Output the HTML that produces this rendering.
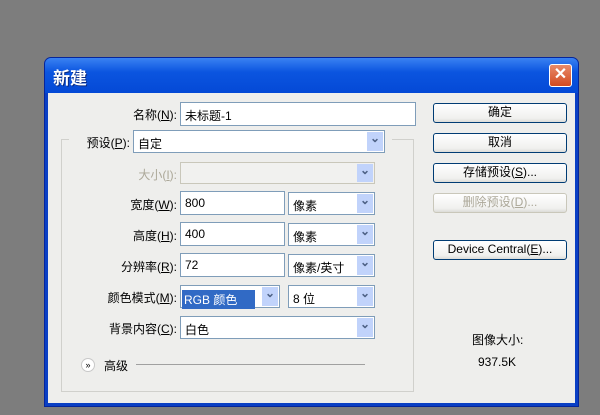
<!DOCTYPE html><html><head><meta charset="utf-8"><style>
*{box-sizing:border-box;margin:0;padding:0}
body{width:600px;height:415px;background:#7d7d7d;position:relative;overflow:hidden;font-family:"Liberation Sans","Noto Sans CJK SC",sans-serif;font-size:12px;color:#000}
.dlg{position:absolute;left:44px;top:57px;width:535px;height:350px;background:#0a3fc4;border-radius:7px 7px 0 0;border:1px solid #06259a}
.title{position:absolute;left:0;top:0;right:0;height:35px;background:linear-gradient(#3a82f2,#0b55e0 40%,#0449d6);border-radius:6px 6px 0 0;color:#fff;font-size:17px;font-weight:bold;padding:6px 0 0 8px;text-shadow:1px 1px #0a2a80}
.close{position:absolute;right:6px;top:6px;width:23px;height:23px;background:linear-gradient(#e88a6a,#d24a20);border:1px solid #fff;border-radius:3px;color:#fff;font-size:16px;text-align:center;line-height:20px;font-weight:bold}
.body{position:absolute;left:3px;top:35px;right:3px;bottom:3px;background:#eeeeec}
.a{position:absolute}
.lbl{position:absolute;text-align:right;font-size:12px}
.in{position:absolute;background:#fff;border:1px solid #7f9db9;padding:4px 4px;font-size:12px}
.sel{position:absolute;background:#fff;border:1px solid #7f9db9;padding:4px 4px;font-size:12px}
.sel::after{content:"⌄";position:absolute;right:1px;top:1px;bottom:1px;width:16px;background:#c1d3fb;color:#4d6185;font-size:12px;text-align:center;line-height:12px;font-weight:bold}
.btn{position:absolute;left:433px;width:134px;height:20px;border:1px solid #003c74;border-radius:3px;background:linear-gradient(#fff,#f0f0ee 80%,#dcdcd8);text-align:center;line-height:17px;font-size:12px}
.dis{color:#aca899;border-color:#c9c7ba}
.grp{position:absolute;left:61px;top:139px;width:353px;height:253px;border:1px solid #d0d0cc;border-top:none}
u{text-decoration:underline}
</style></head><body>
<div class="dlg"><div class="title">新建</div><div class="close">✕</div><div class="body"></div></div>
<div class="grp"></div>
<div class="a" style="left:61px;top:139px;width:8px;border-top:1px solid #d0d0cc"></div>
<div class="a" style="left:392px;top:139px;width:22px;border-top:1px solid #d0d0cc"></div>
<div class="lbl" style="left:100px;top:106px;width:77px">名称(<u>N</u>):</div>
<div class="in" style="left:180px;top:102px;width:236px;height:24px">未标题-1</div>
<div class="lbl" style="left:70px;top:134px;width:60px">预设(<u>P</u>):</div>
<div class="sel" style="left:133px;top:130px;width:252px;height:23px">自定</div>
<div class="lbl" style="left:100px;top:166px;width:77px;color:#aca899">大小(<u>I</u>):</div>
<div class="sel" style="left:180px;top:162px;width:195px;height:22px;border-color:#c9c7ba;background:#f1f1ef"></div>
<div class="lbl" style="left:100px;top:196px;width:77px">宽度(<u>W</u>):</div>
<div class="in" style="left:180px;top:191px;width:105px;height:24px">800</div>
<div class="sel" style="left:288px;top:192px;width:87px;height:23px">像素</div>
<div class="lbl" style="left:100px;top:227px;width:77px">高度(<u>H</u>):</div>
<div class="in" style="left:180px;top:222px;width:105px;height:24px">400</div>
<div class="sel" style="left:288px;top:223px;width:87px;height:23px">像素</div>
<div class="lbl" style="left:80px;top:258px;width:97px">分辨率(<u>R</u>):</div>
<div class="in" style="left:180px;top:253px;width:105px;height:24px">72</div>
<div class="sel" style="left:288px;top:254px;width:87px;height:23px">像素/英寸</div>
<div class="lbl" style="left:60px;top:289px;width:117px">颜色模式(<u>M</u>):</div>
<div class="sel" style="left:180px;top:285px;width:100px;height:23px"><span style="background:#316ac5;color:#fff;padding:1px 2px;margin-left:-3px;display:inline-block;width:73px">RGB 颜色</span></div>
<div class="sel" style="left:288px;top:285px;width:87px;height:23px">8 位</div>
<div class="lbl" style="left:60px;top:320px;width:117px">背景内容(<u>C</u>):</div>
<div class="sel" style="left:180px;top:316px;width:195px;height:23px">白色</div>
<div class="a" style="left:81px;top:358px;width:14px;height:14px;border-radius:50%;background:#fff;border:1px solid #c8c8c8;font-size:9px;text-align:center;line-height:12px">»</div>
<div class="a" style="left:104px;top:357px">高级</div>
<div class="a" style="left:136px;top:364px;width:229px;border-top:1px solid #a0a0a0"></div>
<div class="btn" style="top:103px">确定</div>
<div class="btn" style="top:133px">取消</div>
<div class="btn" style="top:163px">存储预设(<u>S</u>)...</div>
<div class="btn dis" style="top:193px">删除预设(<u>D</u>)...</div>
<div class="btn" style="top:240px">Device Central(<u>E</u>)...</div>
<div class="a" style="left:472px;top:331px">图像大小:</div>
<div class="a" style="left:478px;top:355px">937.5K</div>
</body></html>
